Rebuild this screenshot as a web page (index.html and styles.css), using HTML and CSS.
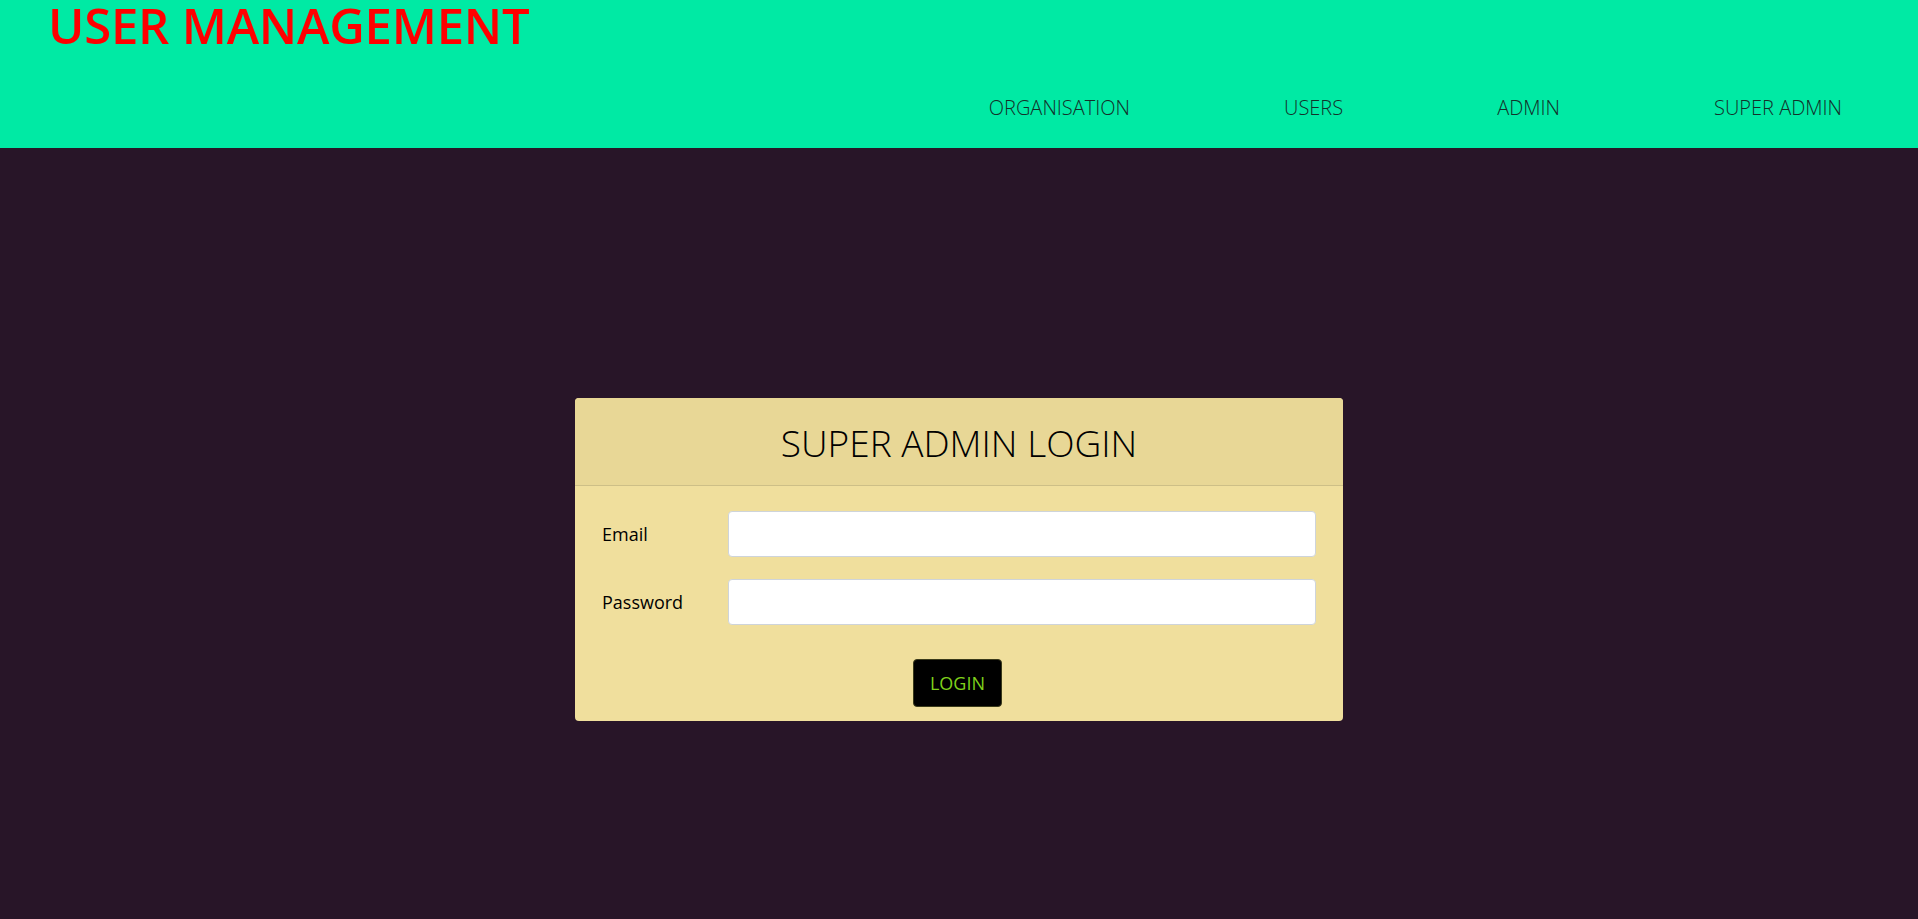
FILE: index.html
```html
<!DOCTYPE html>
<html lang="en">
<head>
<meta charset="utf-8">
<title>User Management</title>
<link rel="stylesheet" href="styles.css">
</head>
<body>
<header class="topbar">
  <h1 class="brand">USER MANAGEMENT</h1>
  <nav class="nav">
    <a class="nav-link" href="#">ORGANISATION</a>
    <a class="nav-link" href="#">USERS</a>
    <a class="nav-link" href="#">ADMIN</a>
    <a class="nav-link" href="#">SUPER ADMIN</a>
  </nav>
</header>
<main class="main">
  <section class="card">
    <div class="card-header">SUPER ADMIN LOGIN</div>
    <form class="card-body">
      <div class="row">
        <label class="label" for="email">Email</label>
        <input class="input" id="email" type="email">
      </div>
      <div class="row">
        <label class="label" for="pw">Password</label>
        <input class="input" id="pw" type="password">
      </div>
      <div class="actions">
        <button class="btn" type="button">LOGIN</button>
      </div>
    </form>
  </section>
</main>
</body>
</html>
```
FILE: styles.css
```css
* { box-sizing: border-box; }
html, body { margin: 0; padding: 0; }
body {
  background: #281528;
  font-family: "Open Sans", "Noto Sans", sans-serif;
  height: 919px;
  overflow: hidden;
}
.topbar {
  background: #00eaa4;
  height: 148px;
  display: flex;
  flex-direction: column;
}
.brand {
  margin: 0;
  padding-left: 48px;
  color: #ff0000;
  font-size: 49px;
  font-weight: 600;
  line-height: 50px;
  letter-spacing: -0.2px;
}
.nav {
  display: flex;
  justify-content: flex-end;
  margin-top: 45px;
  padding-right: 76px;
  gap: 154px;
}
.nav-link {
  color: #14302a;
  text-decoration: none;
  font-size: 20px;
  font-weight: 300;
  line-height: 26px;
}
.main {
  padding-top: 250px;
}
.card {
  width: 768px;
  margin: 0 auto;
  background: #f0df9d;
  border-radius: 4px;
  overflow: hidden;
}
.card-header {
  background: #e8d796;
  border-bottom: 1px solid #cdbf87;
  height: 88px;
  display: flex;
  align-items: center;
  justify-content: center;
  font-size: 37px;
  font-weight: 300;
  color: #000;
  padding-top: 2px;
}
.card-body {
  padding: 25px 27px 14px 27px;
  display: flex;
  flex-direction: column;
  gap: 22px;
}
.row {
  display: flex;
  align-items: center;
}
.label {
  width: 126px;
  font-size: 18px;
  color: #000;
}
.input {
  flex: 1;
  height: 46px;
  border: 1px solid #ced4da;
  border-radius: 4px;
  background: #fff;
}
.actions {
  display: flex;
  justify-content: center;
  margin-top: 12px;
  padding-right: 3px;
}
.btn {
  width: 89px;
  height: 48px;
  background: #000;
  color: #7fd11b;
  border: 1px solid #3a3a1a;
  border-radius: 4px;
  font-family: "Open Sans", "Noto Sans", sans-serif;
  font-size: 18px;
  font-weight: 400;
}
```
